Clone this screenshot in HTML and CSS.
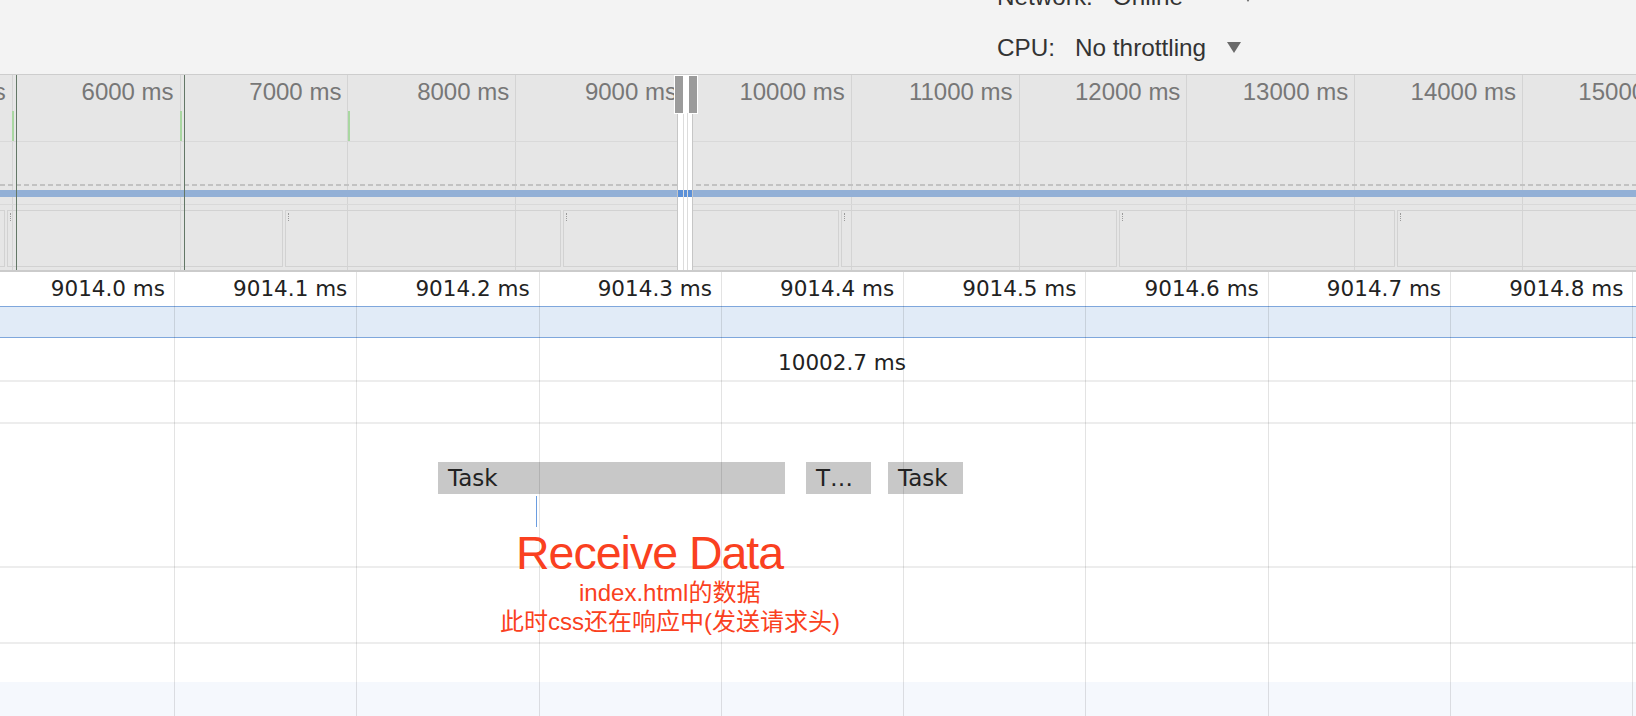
FILE: index.html
```html
<!DOCTYPE html>
<html lang="zh-CN">
<head>
<meta charset="utf-8">
<title>Performance</title>
<link rel="stylesheet" href="styles.css">
</head>
<body>
<div class="app">
  <header class="toolbar">
    <div class="throttle">
      <div class="throttle-row">
        <span class="t-label">Network:</span>
        <span class="t-value t-net">Online</span>
        <span class="t-arrow"></span>
      </div>
      <div class="throttle-row">
        <span class="t-label">CPU:</span>
        <span class="t-value">No throttling</span>
        <span class="t-arrow"></span>
      </div>
    </div>
  </header>

  <section class="overview">
    <div class="ov-grid">
      <div class="ov-col">5000 ms</div>
      <div class="ov-col">6000 ms</div>
      <div class="ov-col">7000 ms</div>
      <div class="ov-col">8000 ms</div>
      <div class="ov-col">9000 ms</div>
      <div class="ov-col">10000 ms</div>
      <div class="ov-col">11000 ms</div>
      <div class="ov-col">12000 ms</div>
      <div class="ov-col">13000 ms</div>
      <div class="ov-col">14000 ms</div>
      <div class="ov-col">15000 ms</div>
    </div>
    <div class="ov-tracks">
      <div class="ov-top"></div>
      <div class="ov-hatch"></div>
      <div class="ov-net"></div>
      <div class="ov-sep"></div>
      <div class="ov-film">
        <div class="film-frame"></div>
        <div class="film-frame mark"></div>
        <div class="film-frame mark"></div>
        <div class="film-frame mark"></div>
        <div class="film-frame mark"></div>
        <div class="film-frame mark"></div>
        <div class="film-frame mark"></div>
      </div>
    </div>
    <div class="ov-marks">
      <div class="green-mark" style="left:12px"></div>
      <div class="green-mark" style="left:180px"></div>
      <div class="green-mark" style="left:348px"></div>
      <div class="dark-line" style="left:16px"></div>
      <div class="dark-line" style="left:184px"></div>
      <div class="ov-window">
        <div class="win-net"></div>
        <div class="win-inner"></div>
      </div>
      <div class="handle" style="left:674px"></div>
      <div class="handle" style="left:688px"></div>
    </div>
  </section>

  <section class="main">
    <div class="ruler">
      <div class="rcell">9014.0 ms</div>
      <div class="rcell">9014.1 ms</div>
      <div class="rcell">9014.2 ms</div>
      <div class="rcell">9014.3 ms</div>
      <div class="rcell">9014.4 ms</div>
      <div class="rcell">9014.5 ms</div>
      <div class="rcell">9014.6 ms</div>
      <div class="rcell">9014.7 ms</div>
      <div class="rcell">9014.8 ms</div>
      <div class="rcell">9014.9 ms</div>
    </div>
    <div class="band"></div>
    <div class="track t-frames"></div>
    <div class="track t-2"></div>
    <div class="track t-main"></div>
    <div class="track t-4"></div>
    <div class="track t-5"></div>
    <div class="band-bottom"></div>

    <div class="frame-label">10002.7 ms</div>
    <div class="task" style="left:438px; width:347px">Task</div>
    <div class="task" style="left:806px; width:65px">T…</div>
    <div class="task" style="left:888px; width:75px">Task</div>
    <div class="event-line" style="left:536px"></div>

    <div class="main-grid">
      <div class="gcol"></div><div class="gcol"></div><div class="gcol"></div>
      <div class="gcol"></div><div class="gcol"></div><div class="gcol"></div>
      <div class="gcol"></div><div class="gcol"></div><div class="gcol"></div>
      <div class="gcol"></div>
    </div>

    <div class="annotation">
      <div class="ann-title">Receive Data</div>
      <div class="ann-line ann-l1">index.html的数据</div>
      <div class="ann-line ann-l2">此时css还在响应中(发送请求头)</div>
    </div>
  </section>
</div>
</body>
</html>
```

FILE: styles.css
```css
* { box-sizing: border-box; }
html, body { margin: 0; padding: 0; }
body {
  width: 1636px;
  height: 716px;
  overflow: hidden;
  background: #fff;
  font-family: "Liberation Sans", Arial, sans-serif;
}

/* ---------- toolbar ---------- */
.toolbar {
  height: 75px;
  background: #f3f3f3;
  border-bottom: 1px solid #cdcdcd;
  overflow: hidden;
}
.throttle {
  margin-left: 997px;
  margin-top: -29px;
  display: flex;
  flex-direction: column;
}
.throttle-row {
  display: flex;
  gap: 20px;
  height: 51px;
  line-height: 51px;
  font-size: 24.3px;
  color: #333;
  white-space: nowrap;
}
.t-net { min-width: 107px; }
.t-arrow {
  margin-top: 20px;
  margin-left: 1px;
  width: 0;
  height: 0;
  border-left: 7px solid transparent;
  border-right: 7px solid transparent;
  border-top: 11px solid #6a6a6a;
}

/* ---------- overview ---------- */
.overview {
  position: relative;
  height: 197px;
  background: #e6e6e6;
  border-bottom: 2px solid #cbcbcb;
  display: grid;
  overflow: hidden;
}
.overview > .ov-grid,
.overview > .ov-tracks { grid-area: 1 / 1; }
.ov-grid {
  display: flex;
  margin-left: -155px;
  height: 195px;
}
.ov-col {
  flex: none;
  width: 167.8px;
  height: 100%;
  border-right: 1px solid #d4d4d4;
  text-align: right;
  padding: 3px 6px 0 0;
  font-size: 24px;
  line-height: 27px;
  color: #777;
  white-space: nowrap;
}
.ov-tracks {
  display: flex;
  flex-direction: column;
  min-width: 0;
}
.ov-top {
  height: 67px;
  border-bottom: 1px solid #d9d9d9;
}
.ov-hatch {
  margin-top: 42px;
  height: 2px;
  background: repeating-linear-gradient(90deg, #c2c2c2 0 5px, transparent 5px 8px);
}
.ov-net {
  margin-top: 4px;
  height: 7px;
  background: #93b0d6;
}
.ov-sep {
  margin-top: 7px;
  height: 1px;
  background: #d9d9d9;
}
.ov-film {
  margin-top: 5px;
  height: 57px;
  display: flex;
  gap: 2.6px;
  margin-left: -270.7px;
}
.film-frame {
  flex: none;
  position: relative;
  width: 275.4px;
  height: 57px;
  border: 1px solid #d2d2d2;
}
.film-frame.mark::before {
  content: "";
  position: absolute;
  left: 2px;
  top: 2px;
  height: 8px;
  border-left: 1px dotted #9a9a9a;
}
.ov-marks {
  position: absolute;
  inset: 0;
}
.green-mark {
  position: absolute;
  top: 36px;
  width: 2px;
  height: 30px;
  background: #a9d7a1;
}
.dark-line {
  position: absolute;
  top: 0;
  bottom: 0;
  width: 1px;
  background: #637766;
}
.ov-window {
  position: absolute;
  left: 677px;
  width: 16px;
  top: 0;
  bottom: 0;
  background: #fff;
  border-left: 1px solid #c6c6c6;
  border-right: 1px solid #c6c6c6;
}
.win-net {
  position: absolute;
  left: 0;
  right: 0;
  top: 115px;
  height: 7px;
  background: #5b90d8;
}
.win-inner {
  position: absolute;
  left: 5px;
  width: 5px;
  top: 38px;
  bottom: 0;
  border-left: 1px solid #dcdcdc;
  border-right: 1px solid #dcdcdc;
}
.handle {
  position: absolute;
  top: 0;
  width: 10px;
  height: 39px;
  background: #9b9b9b;
  border: 1px solid #fff;
}

/* ---------- main flame chart ---------- */
.main {
  position: relative;
  height: 444px;
  overflow: hidden;
  font-family: "DejaVu Sans", sans-serif;
  color: #222;
}
.ruler {
  display: flex;
  height: 34px;
  margin-left: -7.3px;
}
.rcell {
  flex: none;
  width: 182.3px;
  text-align: right;
  padding-right: 10px;
  font-size: 21.5px;
  line-height: 33px;
  white-space: nowrap;
  color: #222;
}
.band {
  height: 32px;
  border-top: 1px solid #7fa7dc;
  border-bottom: 1px solid #7fa7dc;
  background: #e1ebf7;
}
.track { border-bottom: 2px solid #ededed; }
.t-frames { height: 44px; }
.t-2 { height: 42px; }
.t-main { height: 144px; }
.t-4 { height: 76px; }
.t-5 { height: 38px; border-bottom: none; }
.band-bottom {
  height: 34px;
  background: #f5f8fd;
}

.frame-label {
  position: absolute;
  left: 0;
  width: 1684px;
  top: 79px;
  line-height: 24px;
  font-size: 21.5px;
  text-align: center;
  color: #222;
  white-space: nowrap;
}
.task {
  position: absolute;
  top: 190px;
  height: 32px;
  line-height: 33px;
  padding-left: 10px;
  background: #c8c8c8;
  font-size: 23px;
  color: #222;
  white-space: nowrap;
  overflow: hidden;
}
.event-line {
  position: absolute;
  top: 224px;
  width: 1px;
  height: 31px;
  background: #6b9de0;
}
.main-grid {
  position: absolute;
  top: 0;
  bottom: 0;
  left: -7.3px;
  display: flex;
  pointer-events: none;
}
.gcol {
  flex: none;
  width: 182.3px;
  height: 100%;
  border-right: 1px solid rgba(0, 0, 0, 0.11);
}

/* ---------- annotation overlay ---------- */
.annotation {
  position: absolute;
  left: 500px;
  top: 258px;
  display: flex;
  flex-direction: column;
  align-items: flex-start;
  color: #fa4020;
  white-space: nowrap;
}
.ann-title {
  margin-left: 16px;
  font-family: "Liberation Sans", Arial, sans-serif;
  font-size: 46.5px;
  line-height: 46.5px;
  letter-spacing: -1px;
}
.ann-line {
  font-family: "Liberation Sans", "Noto Sans CJK SC", sans-serif;
  font-size: 24px;
  line-height: 29.5px;
}
.ann-l1 { margin-left: 79px; margin-top: 1px; }
.ann-l2 { margin-left: 0; }
```
